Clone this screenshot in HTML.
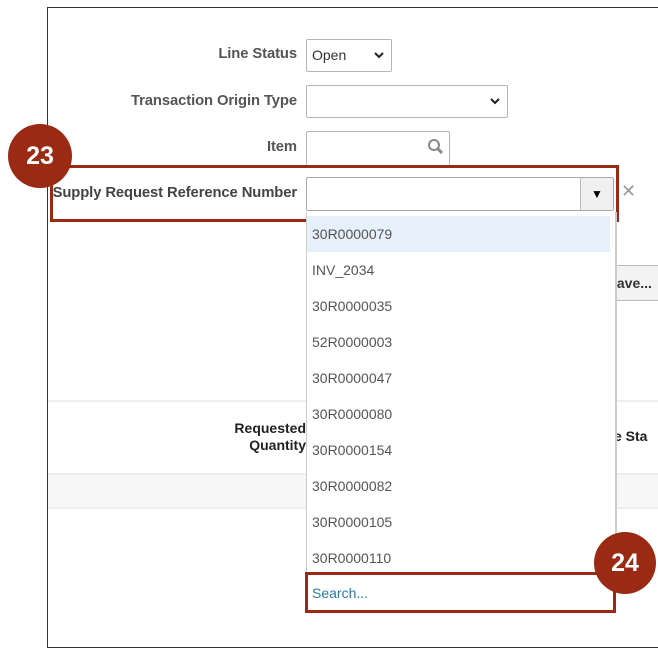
<!DOCTYPE html>
<html><head><style>
body{margin:0;width:658px;height:650px;background:#fff;position:relative;overflow:hidden;font-family:"Liberation Sans",sans-serif}
.a{position:absolute}
.lbl{position:absolute;font-size:14.8px;font-weight:bold;color:#555;text-align:right;right:361px;letter-spacing:-0.1px}
.box{position:absolute;border:1px solid #b5b5b5;border-radius:2px;background:#fff}
.it{position:absolute;left:312px;font-size:14px;color:#555}
.circ{position:absolute;border-radius:50%;background:#9b2a14;color:#fff;font-weight:bold;font-size:25px;text-align:center}
.chev{position:absolute;right:7px;top:11px}
</style></head><body>
<div class="a" style="left:47px;top:7px;width:610px;height:639px;border:1px solid #333;border-right:none"></div>
<div class="a" style="left:48px;top:400px;width:610px;height:2px;background:#eee"></div>
<div class="a" style="left:48px;top:473px;width:610px;height:32px;background:#f7f7f7;border-top:2px solid #eee;border-bottom:2px solid #eee"></div>
<div class="a" style="left:200px;top:420px;width:106px;font-size:14px;font-weight:bold;color:#222;text-align:right;line-height:17px">Requested<br>Quantity</div>
<div class="a" style="left:614px;top:428px;font-size:14px;font-weight:bold;color:#222">e Sta</div>
<div class="a" style="left:612px;top:265px;width:50px;height:34px;border:1px solid #bbb;background:#f3f3f3;font-size:14px;font-weight:bold;color:#333;line-height:34px">&nbsp;ave...</div>

<div class="lbl" style="top:46px">Line Status</div>
<div class="box" style="left:306px;top:39px;width:84px;height:31px"><span class="a" style="left:5px;top:7px;font-size:14px;color:#333">Open</span><svg class="chev" width="10" height="8" viewBox="0 0 10 8"><path d="M1 2L5 6L9 2" fill="none" stroke="#222" stroke-width="2"/></svg></div>
<div class="lbl" style="top:93px">Transaction Origin Type</div>
<div class="box" style="left:306px;top:85px;width:200px;height:31px"><svg class="chev" width="10" height="8" viewBox="0 0 10 8"><path d="M1 2L5 6L9 2" fill="none" stroke="#222" stroke-width="2"/></svg></div>
<div class="lbl" style="top:139px">Item</div>
<div class="box" style="left:306px;top:131px;width:142px;height:40px">
<svg class="a" style="left:120px;top:6px" width="18" height="18" viewBox="0 0 18 18"><circle cx="7" cy="7" r="5" fill="none" stroke="#888" stroke-width="2"/><path d="M10.5 10.5L15 15" stroke="#888" stroke-width="3"/></svg></div>

<div class="a" style="left:50px;top:165px;width:563px;height:51px;border:3px solid #9b2a14;background:#fff"></div>
<div class="lbl" style="top:185px;color:#444">Supply Request Reference Number</div>
<div class="box" style="left:306px;top:177px;width:306px;height:32px;border-color:#aaa">
<div class="a" style="right:0;top:0;width:32px;height:32px;border-left:1px solid #bbb;background:#f0f0f0;text-align:center;line-height:32px;font-size:12px">&#9660;</div></div>
<div class="a" style="left:621px;top:181px;font-size:18px;color:#999">&#10005;</div>

<div class="a" style="left:306px;top:212px;width:308px;height:360px;border-left:1px solid #ccc;border-right:2px solid #ccc;background:#fff"></div>
<div class="a" style="left:307px;top:216px;width:303px;height:36px;background:#e6f0fa"></div>
<div class="it" style="top:226px">30R0000079</div>
<div class="it" style="top:262px">INV_2034</div>
<div class="it" style="top:298px">30R0000035</div>
<div class="it" style="top:334px">52R0000003</div>
<div class="it" style="top:370px">30R0000047</div>
<div class="it" style="top:406px">30R0000080</div>
<div class="it" style="top:442px">30R0000154</div>
<div class="it" style="top:478px">30R0000082</div>
<div class="it" style="top:514px">30R0000105</div>
<div class="it" style="top:550px">30R0000110</div>
<div class="a" style="left:305px;top:572px;width:305px;height:35px;border:3px solid #9b2a14;background:#fff"></div>
<div class="it" style="top:585px;color:#2a7ba8">Search...</div>

<div class="circ" style="left:8px;top:124px;width:64px;height:64px;line-height:64px">23</div>
<div class="circ" style="left:594px;top:532px;width:62px;height:62px;line-height:62px">24</div>
</body></html>
